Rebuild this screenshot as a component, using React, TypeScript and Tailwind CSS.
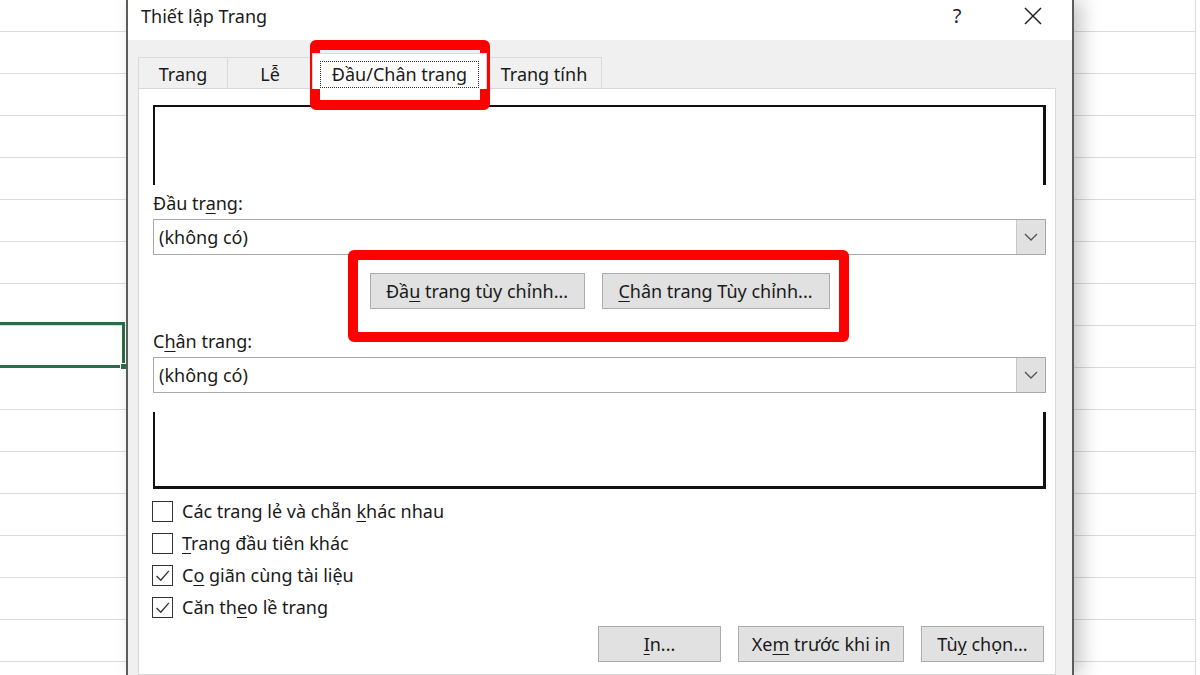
import React from "react";

const Key = ({ children }: { children: React.ReactNode }) => (
  <span className="underline underline-offset-[3px] decoration-1">{children}</span>
);

const Chevron = () => (
  <svg viewBox="0 0 14 8" className="w-[14px] h-[8px]" fill="none" stroke="#555" strokeWidth="1.4">
    <path d="M1 1L7 7L13 1" />
  </svg>
);

const Dropdown = ({ value }: { value: string }) => (
  <div className="flex h-[36px] border border-[#a9a9a9] bg-white">
    <div className="flex-1 flex items-center pl-[5px] text-[18px]">{value}</div>
    <div className="w-[29px] h-full bg-[#e1e1e1] border-l border-[#c8c8c8] flex items-center justify-center">
      <Chevron />
    </div>
  </div>
);

const Button = ({ children, width }: { children: React.ReactNode; width: string }) => (
  <div
    className={`${width} h-[36px] bg-[#e1e1e1] border border-[#adadad] flex items-center justify-center text-[18px] text-[#1a1a1a]`}
  >
    {children}
  </div>
);

const Checkbox = ({ checked, children }: { checked: boolean; children: React.ReactNode }) => (
  <div className="h-[32px] flex items-center gap-[9px] -ml-px">
    <div className="w-[21px] h-[21px] border border-[#333] bg-white flex items-center justify-center">
      {checked && (
        <svg viewBox="0 0 20 20" className="w-[17px] h-[17px]" fill="none" stroke="#333" strokeWidth="1.6">
          <path d="M3 10.5L8 15.5L17.5 4.5" />
        </svg>
      )}
    </div>
    <span className="text-[18px]">{children}</span>
  </div>
);

export default function App() {
  const rows = Array.from({ length: 16 });

  return (
    <div className="relative w-[1200px] h-[675px] overflow-hidden bg-white font-['Noto_Sans',sans-serif] text-[#1a1a1a]">
      {/* spreadsheet behind the dialog */}
      <div className="flex flex-col">
        <div className="h-[32px] w-[1196px] border-b border-r border-[#dcdcdc]" />
        {rows.map((_, i) => (
          <div key={i} className="h-[42px] w-[1196px] border-b border-r border-[#dcdcdc]" />
        ))}
      </div>

      {/* selected cell */}
      <div className="absolute left-[-3px] top-[322px] w-[128px] h-[46px] border-[3px] border-[#2f6b48]">
        <div className="absolute right-[-5px] bottom-[-5px] w-[7px] h-[7px] bg-[#2f6b48] border border-white" />
      </div>

      {/* dialog */}
      <div className="absolute left-[126px] top-0 w-[948px] h-[675px] flex flex-col border-x-2 border-[#5c5c5c] shadow-[8px_0_18px_rgba(0,0,0,0.22)]">
        {/* title bar */}
        <div className="h-[40px] bg-white flex items-center pl-[13px] pb-[8px]">
          <span className="text-[18px] text-[#1a1a1a]">Thiết lập Trang</span>
          <div className="ml-auto flex items-center gap-[31px] pr-[14px]">
            <div className="w-[40px] flex justify-center text-[20px] text-[#222]">?</div>
            <div className="w-[50px] flex justify-center">
              <svg viewBox="0 0 18 18" className="w-[18px] h-[18px]" fill="none" stroke="#222" strokeWidth="1.5">
                <path d="M1 1L17 17M17 1L1 17" />
              </svg>
            </div>
          </div>
        </div>

        {/* body */}
        <div className="flex-1 bg-[#f0f0f0] pl-[10px] pr-[16px] flex flex-col">
          {/* tabs */}
          <div className="h-[48px] flex items-end text-[18px]">
            <div className="w-[89px] h-[31px] border-t border-l border-[#d9d9d9] flex items-center justify-center pt-[2px]">
              Trang
            </div>
            <div className="w-[85px] h-[31px] border-t border-l border-[#d9d9d9] flex items-center justify-center pt-[2px]">
              Lễ
            </div>
            <div className="w-[175px] h-[36px] -mb-px bg-white border-t border-x border-[#d9d9d9] flex items-center justify-center pt-[5px] relative z-10">
              <span className="border border-dotted border-[#333] px-[11px] leading-[25px]">Đầu/Chân trang</span>
            </div>
            <div className="w-[115px] h-[31px] border-t border-r border-[#d9d9d9] flex items-center justify-center pt-[2px]">
              Trang tính
            </div>
          </div>

          {/* panel */}
          <div className="flex-1 bg-white border border-[#d9d9d9] pl-[14px] pr-[9px] pt-[16px] flex flex-col">
            <div className="h-[80px] border-t-2 border-l-2 border-r-[3px] border-[#111]" />

            <div className="mt-[5px] h-[26px] leading-[26px] text-[18px]">
              Đầu tr<Key>a</Key>ng:
            </div>
            <div className="mt-[3px]">
              <Dropdown value="(không có)" />
            </div>

            <div className="mt-[18px] flex justify-center gap-[17px]">
              <Button width="w-[215px]">
                <span>
                  Đầ<Key>u</Key> trang tùy chỉnh...
                </span>
              </Button>
              <Button width="w-[228px]">
                <span>
                  <Key>C</Key>hân trang Tùy chỉnh...
                </span>
              </Button>
            </div>

            <div className="mt-[19px] h-[26px] leading-[26px] text-[18px]">
              C<Key>h</Key>ân trang:
            </div>
            <div className="mt-[3px]">
              <Dropdown value="(không có)" />
            </div>

            <div className="mt-[19px] h-[77px] border-l-2 border-b-[3px] border-r-[3px] border-[#111]" />

            <div className="mt-[6px] flex flex-col">
              <Checkbox checked={false}>
                Các trang lẻ và chẵn <Key>k</Key>hác nhau
              </Checkbox>
              <Checkbox checked={false}>
                <Key>T</Key>rang đầu tiên khác
              </Checkbox>
              <Checkbox checked>
                C<Key>o</Key> giãn cùng tài liệu
              </Checkbox>
              <Checkbox checked>
                Căn th<Key>e</Key>o lề trang
              </Checkbox>
            </div>

            <div className="mt-[3px] flex justify-end gap-[17px] pr-[2px]">
              <Button width="w-[123px]">
                <span>
                  <Key>I</Key>n...
                </span>
              </Button>
              <Button width="w-[166px]">
                <span>
                  Xe<Key>m</Key> trước khi in
                </span>
              </Button>
              <Button width="w-[123px]">
                <span>
                  Tù<Key>y</Key> chọn...
                </span>
              </Button>
            </div>
          </div>
        </div>
      </div>

      {/* red annotation boxes */}
      <div className="absolute left-[310px] top-[40px] w-[180px] h-[70px] border-[10px] border-[#ff0000] rounded-[6px]" />
      <div className="absolute left-[348px] top-[250px] w-[501px] h-[92px] border-[10px] border-[#ff0000] rounded-[6px]" />
    </div>
  );
}
